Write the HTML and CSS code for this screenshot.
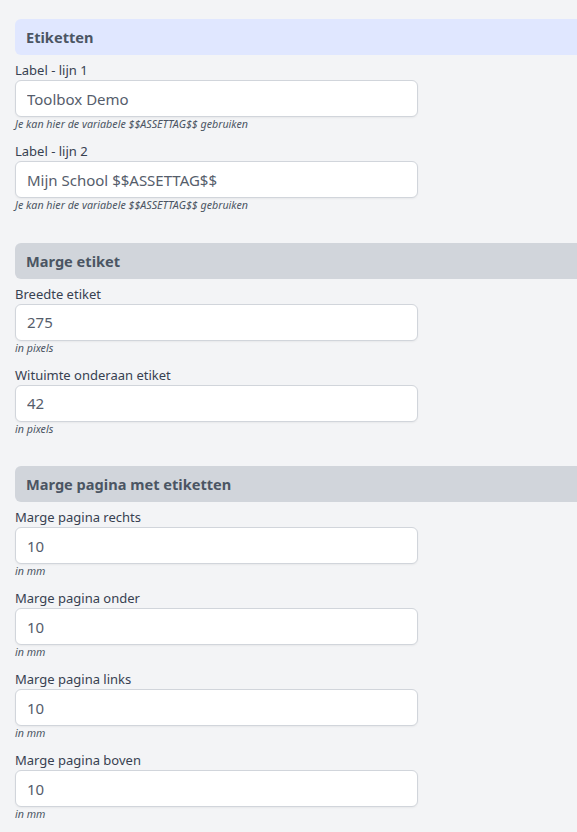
FILE: index.html
```html
<!DOCTYPE html>
<html lang="nl">
<head>
<meta charset="utf-8">
<title>Etiketten</title>
<link rel="stylesheet" href="styles.css">
</head>
<body>
<div class="page">
  <section class="section">
    <h2 class="section-title section-title--accent">Etiketten</h2>
    <div class="field">
      <label class="field-label">Label - lijn 1</label>
      <input class="field-input" type="text" value="Toolbox Demo">
      <p class="field-help">Je kan hier de variabele $$ASSETTAG$$ gebruiken</p>
    </div>
    <div class="field">
      <label class="field-label">Label - lijn 2</label>
      <input class="field-input" type="text" value="Mijn School $$ASSETTAG$$">
      <p class="field-help">Je kan hier de variabele $$ASSETTAG$$ gebruiken</p>
    </div>
  </section>
  <section class="section">
    <h2 class="section-title">Marge etiket</h2>
    <div class="field">
      <label class="field-label">Breedte etiket</label>
      <input class="field-input" type="text" value="275">
      <p class="field-help">in pixels</p>
    </div>
    <div class="field">
      <label class="field-label">Wituimte onderaan etiket</label>
      <input class="field-input" type="text" value="42">
      <p class="field-help">in pixels</p>
    </div>
  </section>
  <section class="section">
    <h2 class="section-title">Marge pagina met etiketten</h2>
    <div class="field">
      <label class="field-label">Marge pagina rechts</label>
      <input class="field-input" type="text" value="10">
      <p class="field-help">in mm</p>
    </div>
    <div class="field">
      <label class="field-label">Marge pagina onder</label>
      <input class="field-input" type="text" value="10">
      <p class="field-help">in mm</p>
    </div>
    <div class="field">
      <label class="field-label">Marge pagina links</label>
      <input class="field-input" type="text" value="10">
      <p class="field-help">in mm</p>
    </div>
    <div class="field">
      <label class="field-label">Marge pagina boven</label>
      <input class="field-input" type="text" value="10">
      <p class="field-help">in mm</p>
    </div>
  </section>
</div>
</body>
</html>
```

FILE: styles.css
```css
html, body {
  margin: 0;
  padding: 0;
  background: #f3f4f6;
  overflow: hidden;
}

body {
  font-family: "Noto Sans", "Open Sans", sans-serif;
  color: #374151;
}

.page {
  padding: 19px 0 0 15px;
  display: flex;
  flex-direction: column;
  gap: 20.5px;
}

.section {
  display: flex;
  flex-direction: column;
}

.section-title {
  margin: 0 0 5px 0;
  height: 36px;
  display: flex;
  align-items: center;
  padding: 0 11px;
  font-size: 14.6px;
  font-weight: 700;
  color: #4b5563;
  background: #d1d5db;
  border-radius: 6px 0 0 6px;
}

.section-title--accent {
  background: #e0e7ff;
}

.field {
  display: flex;
  flex-direction: column;
  margin-bottom: 10px;
}

.field-label {
  font-size: 13px;
  line-height: 20px;
  color: #374151;
}

.field-input {
  box-sizing: border-box;
  width: 403px;
  height: 37px;
  margin: 0;
  padding: 0 11px;
  font-family: "Noto Sans", "Open Sans", sans-serif;
  font-size: 15px;
  color: #555d6b;
  background: #ffffff;
  border: 1px solid #d1d5db;
  border-radius: 6px;
  box-shadow: 0 1px 2px rgba(0, 0, 0, 0.05);
  outline: none;
}

.field-help {
  margin: 0;
  font-size: 10.7px;
  line-height: 14px;
  font-style: italic;
  color: #4b5563;
}
```
